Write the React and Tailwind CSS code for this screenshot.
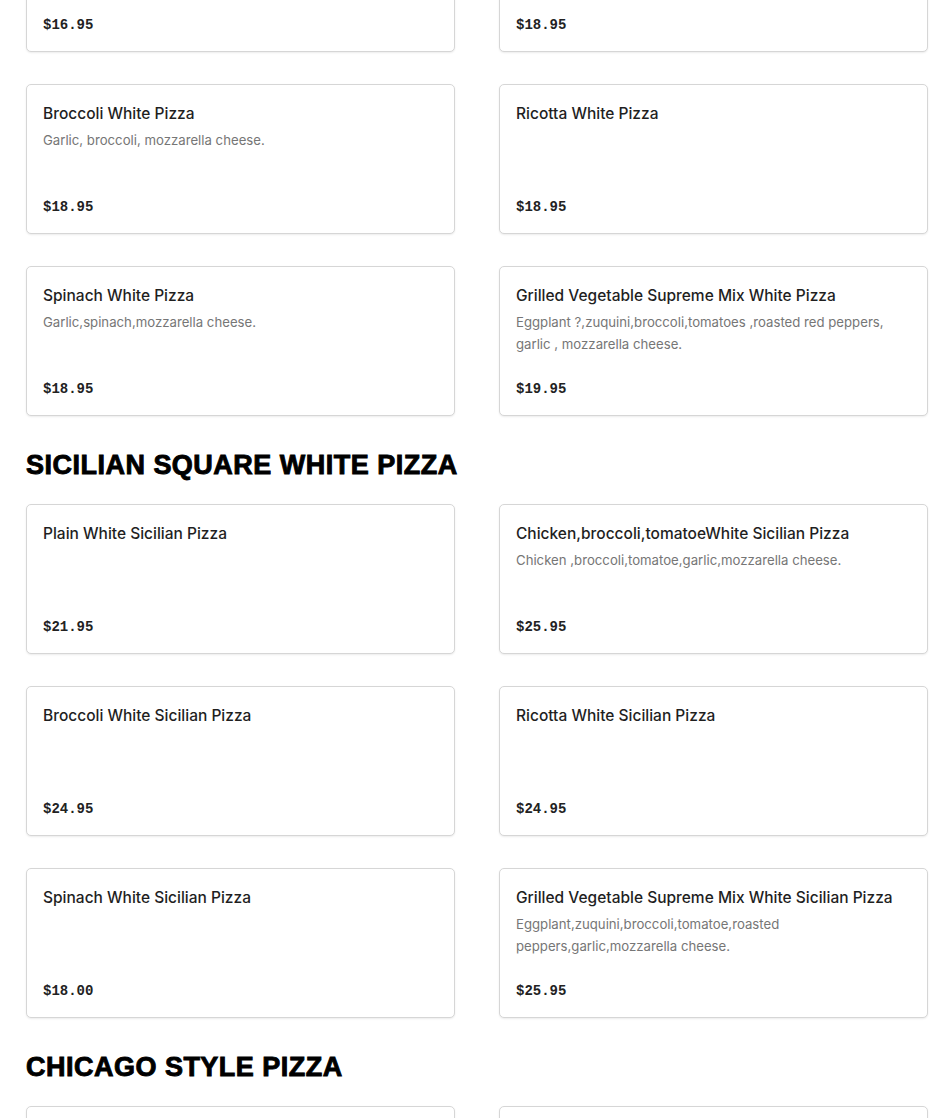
const sections = [
  {
    title: null,
    items: [
      { name: 'Plain White Pizza', desc: '', price: '$16.95' },
      { name: 'Chicken White Pizza', desc: '', price: '$18.95' },
      { name: 'Broccoli White Pizza', desc: 'Garlic, broccoli, mozzarella cheese.', price: '$18.95' },
      { name: 'Ricotta White Pizza', desc: '', price: '$18.95' },
      { name: 'Spinach White Pizza', desc: 'Garlic,spinach,mozzarella cheese.', price: '$18.95' },
      {
        name: 'Grilled Vegetable Supreme Mix White Pizza',
        desc: 'Eggplant ?,zuquini,broccoli,tomatoes ,roasted red peppers, garlic , mozzarella cheese.',
        price: '$19.95',
      },
    ],
  },
  {
    title: 'SICILIAN SQUARE WHITE PIZZA',
    items: [
      { name: 'Plain White Sicilian Pizza', desc: '', price: '$21.95' },
      {
        name: 'Chicken,broccoli,tomatoeWhite Sicilian Pizza',
        desc: 'Chicken ,broccoli,tomatoe,garlic,mozzarella cheese.',
        price: '$25.95',
      },
      { name: 'Broccoli White Sicilian Pizza', desc: '', price: '$24.95' },
      { name: 'Ricotta White Sicilian Pizza', desc: '', price: '$24.95' },
      { name: 'Spinach White Sicilian Pizza', desc: '', price: '$18.00' },
      {
        name: 'Grilled Vegetable Supreme Mix White Sicilian Pizza',
        desc: 'Eggplant,zuquini,broccoli,tomatoe,roasted peppers,garlic,mozzarella cheese.',
        price: '$25.95',
        narrow: true,
      },
    ],
  },
  {
    title: 'CHICAGO STYLE PIZZA',
    items: [
      { name: 'Chicago Deep Dish Pizza', desc: '', price: '$22.95' },
      { name: 'Chicago Deep Dish Special', desc: '', price: '$26.95' },
    ],
  },
];

function MenuCard({ item }) {
  return (
    <div className="h-[150px] bg-white border border-[#d6d6d6] rounded-[5px] shadow-[0_1px_2px_rgba(0,0,0,0.08)] px-4 pt-[17px] pb-4 flex flex-col">
      <h3 className="text-[15.5px] leading-6 font-medium text-[#1f1f1f] font-['Inter',sans-serif]">
        {item.name}
      </h3>
      {item.desc && (
        <p
          className={`mt-[3px] text-[13.2px] leading-[22px] text-[#767676] font-['Inter',sans-serif] ${
            item.narrow ? 'max-w-[280px]' : ''
          }`}
        >
          {item.desc}
        </p>
      )}
      <p className="mt-auto text-[14px] leading-5 font-bold text-[#222] font-['Liberation_Mono',monospace]">
        {item.price}
      </p>
    </div>
  );
}

export default function App() {
  return (
    <div className="bg-white min-h-screen overflow-hidden">
      <div className="-mt-[98px] pl-[26px]">
        {sections.map((section, idx) => (
          <div key={idx}>
            {section.title && (
              <h2 className="pt-[31px] pb-[21px] text-[27px] leading-9 font-black tracking-[0.018em] text-black [-webkit-text-stroke:0.9px_black] font-['Liberation_Sans',sans-serif]">
                {section.title}
              </h2>
            )}
            <div className="grid grid-cols-[429px_429px] gap-x-[44px] gap-y-8">
              {section.items.map((item, i) => (
                <MenuCard key={i} item={item} />
              ))}
            </div>
          </div>
        ))}
      </div>
    </div>
  );
}
